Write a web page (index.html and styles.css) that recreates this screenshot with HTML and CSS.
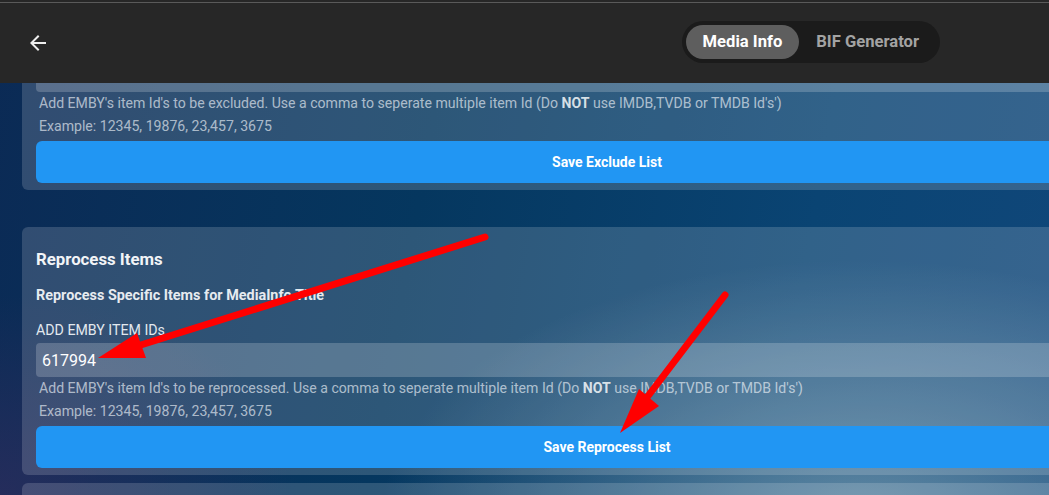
FILE: index.html
```html
<!DOCTYPE html>
<html lang="en">
<head>
    <meta charset="UTF-8">
    <meta name="viewport" content="width=device-width, initial-scale=1.0">
    <title>Media Info</title>
    <link rel="stylesheet" href="styles.css">
</head>
<body>
    <!-- Barra superiore -->
    <header class="topbar">
        <button class="back-btn" type="button" aria-label="Back">
            <svg width="24" height="24" viewBox="0 0 24 24"><path d="M20 11H7.83l5.59-5.59L12 4l-8 8 8 8 1.41-1.41L7.83 13H20v-2z" fill="#eeeeee"/></svg>
        </button>
        <nav class="tabs">
            <span class="tab active">Media Info</span>
            <span class="tab">BIF Generator</span>
        </nav>
    </header>

    <main class="page">
        <!-- scheda scorsa sotto la barra: si vede solo la parte bassa -->
        <section class="card card-exclude">
            <input class="field-input" type="text" value="">
            <p class="help">Add EMBY's item Id's to be excluded. Use a comma to seperate multiple item Id (Do <b>NOT</b> use IMDB,TVDB or TMDB Id's')</p>
            <p class="help">Example: 12345, 19876, 23,457, 3675</p>
            <button class="save-btn" type="button">Save Exclude List</button>
        </section>

        <section class="card card-reprocess">
            <h3 class="card-title">Reprocess Items</h3>
            <h4 class="card-subtitle">Reprocess Specific Items for MediaInfo Title</h4>
            <label class="field-label">ADD EMBY ITEM IDs</label>
            <input class="field-input" type="text" value="617994">
            <p class="help">Add EMBY's item Id's to be reprocessed. Use a comma to seperate multiple item Id (Do <b>NOT</b> use IMDB,TVDB or TMDB Id's')</p>
            <p class="help">Example: 12345, 19876, 23,457, 3675</p>
            <button class="save-btn" type="button">Save Reprocess List</button>
        </section>

        <section class="card card-next"></section>
    </main>

    <!-- Frecce rosse di annotazione -->
    <svg class="annotations" width="1049" height="495" viewBox="0 0 1049 495">
        <line x1="485" y1="237" x2="128" y2="349" stroke="#ff0000" stroke-width="7" stroke-linecap="round"/>
        <polygon points="98,358 137,333 146,358" fill="#ff0000"/>
        <line x1="725" y1="295" x2="645" y2="400" stroke="#ff0000" stroke-width="7" stroke-linecap="round"/>
        <polygon points="620,433 639,389 659,406" fill="#ff0000"/>
    </svg>
</body>
</html>
```

FILE: styles.css
```css
html, body {
    margin: 0;
    height: 100%;
    overflow: hidden;
}
body {
    position: relative;
    font-family: Roboto, "Liberation Sans", sans-serif;
    color: #fff;
    background-color: #06386a;
    background-image:
        radial-gradient(ellipse 480px 260px at 860px 520px, rgba(125, 160, 180, 0.75), rgba(125, 160, 180, 0) 100%),
        radial-gradient(ellipse 300px 200px at 0px 495px, rgba(55, 45, 95, 0.6), rgba(55, 45, 95, 0) 100%),
        linear-gradient(100deg, #0b2a55 0%, #05375f 40%, #0a4473 75%, #10477a 100%);
}

/* Barra superiore */
.topbar {
    position: fixed;
    top: 0;
    left: 0;
    right: 0;
    height: 83px;
    z-index: 5;
    display: flex;
    align-items: center;
    justify-content: space-between;
    background-color: #272727;
    box-shadow: inset 0 2px #272727, inset 0 3px #5a5a5a;
    padding: 0 109px 0 26px;
}
.back-btn {
    background: none;
    border: none;
    padding: 0;
    width: 24px;
    height: 24px;
    margin-top: 2px;
    cursor: pointer;
}
.tabs {
    display: flex;
    align-items: center;
    background-color: #1b1b1b;
    border-radius: 21px;
    padding: 4px;
}
.tab {
    height: 34px;
    line-height: 34px;
    padding: 0 17px;
    border-radius: 17px;
    font-size: 16.6px;
    font-weight: bold;
    color: #a3a3a3;
}
.tab.active {
    background-color: #5e5e5e;
    color: #fff;
}

/* Schede */
.page {
    width: 1170px;
    margin: 58px 0 0 22px;
}
.card {
    background-color: rgba(255, 255, 255, 0.16);
    border-radius: 6px;
    padding: 22px 14px 7px;
}
.card-exclude {
    padding-top: 0;
    border-radius: 0 0 6px 6px;
    margin-bottom: 37px;
}
.card-reprocess {
    margin-bottom: 8px;
}
.card-next {
    height: 120px;
}
.card-title {
    margin: 0;
    font-size: 16.8px;
    line-height: 20px;
    color: #f2f4f7;
}
.card-subtitle {
    margin: 18px 0 0;
    font-size: 14.4px;
    line-height: 18px;
    color: #e6ebf0;
}
.field-label {
    display: block;
    margin-top: 16px;
    font-size: 14.2px;
    line-height: 18px;
    color: #e2e8ee;
}
.field-input {
    display: block;
    box-sizing: border-box;
    width: 100%;
    height: 34px;
    margin-top: 4px;
    padding: 0 6px;
    border: none;
    border-radius: 4px;
    background-color: rgba(255, 255, 255, 0.2);
    color: #fff;
    font-family: Roboto, "Liberation Sans", sans-serif;
    font-size: 16px;
    outline: none;
}
.card-exclude .field-input {
    margin-top: 0;
}
.help {
    margin: 0;
    padding-left: 3px;
    font-size: 14.1px;
    line-height: 23px;
    color: rgba(235, 240, 246, 0.68);
}
.help b {
    color: rgba(245, 248, 250, 0.85);
}
.save-btn {
    display: block;
    width: 100%;
    height: 42px;
    margin-top: 3px;
    border: none;
    border-radius: 6px;
    background-color: #2196f3;
    color: #fff;
    font-family: Roboto, "Liberation Sans", sans-serif;
    font-size: 14px;
    font-weight: bold;
    cursor: pointer;
}

/* Frecce di annotazione */
.annotations {
    position: absolute;
    top: 0;
    left: 0;
    z-index: 10;
    pointer-events: none;
}
```
